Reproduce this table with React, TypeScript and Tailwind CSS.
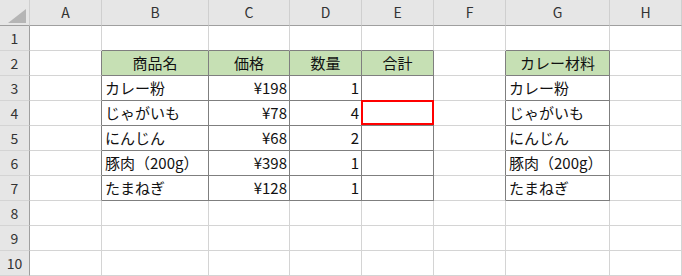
import React from "react";

const COLS = ["A", "B", "C", "D", "E", "F", "G", "H"];
const WIDTHS = ["w-[72px]", "w-[107px]", "w-[81px]", "w-[72px]", "w-[72px]", "w-[72px]", "w-[104px]", "w-[72px]"];

type Cell = { v: string; align?: "l" | "r" | "c"; head?: boolean };

// Sheet contents keyed by "row:colIndex" (colIndex 1 = A)
const DATA: Record<string, Cell> = {
  "2:2": { v: "商品名", align: "c", head: true },
  "2:3": { v: "価格", align: "c", head: true },
  "2:4": { v: "数量", align: "c", head: true },
  "2:5": { v: "合計", align: "c", head: true },
  "2:7": { v: "カレー材料", align: "c", head: true },
  "3:2": { v: "カレー粉" },
  "3:3": { v: "¥198", align: "r" },
  "3:4": { v: "1", align: "r" },
  "3:7": { v: "カレー粉" },
  "4:2": { v: "じゃがいも" },
  "4:3": { v: "¥78", align: "r" },
  "4:4": { v: "4", align: "r" },
  "4:7": { v: "じゃがいも" },
  "5:2": { v: "にんじん" },
  "5:3": { v: "¥68", align: "r" },
  "5:4": { v: "2", align: "r" },
  "5:7": { v: "にんじん" },
  "6:2": { v: "豚肉（200g）" },
  "6:3": { v: "¥398", align: "r" },
  "6:4": { v: "1", align: "r" },
  "6:7": { v: "豚肉（200g）" },
  "7:2": { v: "たまねぎ" },
  "7:3": { v: "¥128", align: "r" },
  "7:4": { v: "1", align: "r" },
  "7:7": { v: "たまねぎ" },
};

const inTable = (r: number, c: number) =>
  r >= 2 && r <= 7 && ((c >= 2 && c <= 5) || c === 7);

const FONT = "font-['Noto_Sans_CJK_JP','Noto_Sans',sans-serif] [font-kerning:none]";

function Corner() {
  return (
    <div className="w-[30px] h-[26px] bg-[#e6e6e6] border-r border-b border-r-[#cfcfcf] border-b-[#9f9f9f] flex items-end justify-end pr-[3px] pb-[2px]">
      <svg width="18" height="14" viewBox="0 0 18 14">
        <polygon points="18,0 18,14 0,14" fill="#b5b5b5" />
      </svg>
    </div>
  );
}

function ColHead({ label, w }: { label: string; w: string }) {
  return (
    <div
      className={`${w} h-[26px] bg-[#e6e6e6] border-r border-b border-r-[#cfcfcf] border-b-[#9f9f9f] flex items-center justify-center text-[14px] text-[#333]`}
    >
      {label}
    </div>
  );
}

function RowHead({ n }: { n: number }) {
  return (
    <div className="w-[30px] h-[25px] bg-[#e6e6e6] border-r border-b border-r-[#9f9f9f] border-b-[#d4d4d4] flex items-center justify-center text-[14px] text-[#333]">
      {n}
    </div>
  );
}

function SheetCell({ r, c, w }: { r: number; c: number; w: string }) {
  const cell = DATA[`${r}:${c}`];
  const darkR = inTable(r, c) || inTable(r, c + 1);
  const darkB = inTable(r, c) || inTable(r + 1, c);
  const align =
    cell?.align === "r" ? "justify-end pr-[2px]" : cell?.align === "c" ? "justify-center" : "justify-start pl-[3px]";
  const marked = r === 4 && c === 5;
  return (
    <div
      className={`relative ${w} h-[25px] border-r border-b flex items-center ${align} text-[15px] text-[#111] whitespace-nowrap ${
        darkR ? "border-r-[#7f7f7f]" : "border-r-[#d4d4d4]"
      } ${darkB ? "border-b-[#7f7f7f]" : "border-b-[#d4d4d4]"} ${cell?.head ? "bg-[#c6e0b4]" : "bg-white"}`}
    >
      {cell?.v}
      {marked && (
        <div className="absolute -left-px -top-px w-[73px] h-[25px] border-2 border-[#ff0000]" />
      )}
    </div>
  );
}

export default function App() {
  const rows = Array.from({ length: 10 }, (_, i) => i + 1);
  return (
    <div className={`w-[682px] h-[276px] overflow-hidden bg-white ${FONT}`}>
      <div className="flex">
        <Corner />
        {COLS.map((l, i) => (
          <ColHead key={l} label={l} w={WIDTHS[i]} />
        ))}
      </div>
      {rows.map((r) => (
        <div key={r} className="flex">
          <RowHead n={r} />
          {COLS.map((l, i) => (
            <SheetCell key={l} r={r} c={i + 1} w={WIDTHS[i]} />
          ))}
        </div>
      ))}
    </div>
  );
}
